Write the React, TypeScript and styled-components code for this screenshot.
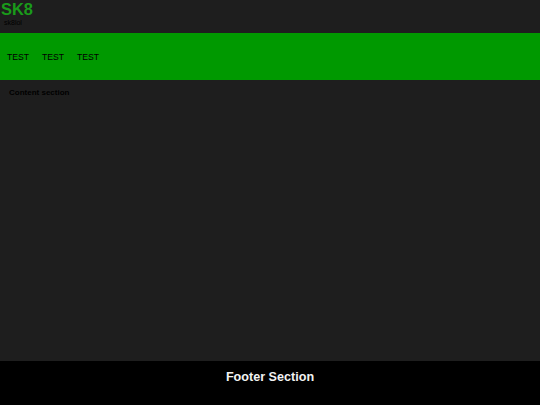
import React from "react";
import styled, { createGlobalStyle } from "styled-components";

const Global = createGlobalStyle`
  html, body { margin: 0; padding: 0; background: #1e1e1e; }
  body { font-family: "Liberation Sans", Arial, sans-serif; }
  #root { min-height: 405px; }
`;

const Page = styled.div`
  display: flex;
  flex-direction: column;
  height: 405px;
  background: #1e1e1e;
`;

const Header = styled.header`
  height: 33px;
  display: flex;
  flex-direction: column;
`;

const Logo = styled.h1`
  margin: 0 0 0 1px;
  font-size: 16.4px;
  line-height: 19px;
  font-weight: bold;
  color: #1a9a1a;
`;

const Tagline = styled.div`
  margin: 0 0 0 4px;
  font-size: 7px;
  line-height: 8px;
  color: #000;
`;

const Nav = styled.nav`
  height: 47px;
  background: #009900;
  display: flex;
  align-items: center;
  gap: 13px;
  padding-left: 7px;
`;

const NavItem = styled.span`
  font-size: 8.6px;
  color: #000;
`;

const Content = styled.main`
  flex: 1;
  padding: 8px 9px;
`;

const ContentTitle = styled.div`
  font-size: 8px;
  font-weight: bold;
  color: #000;
`;

const Footer = styled.footer`
  height: 44px;
  background: #000;
  display: flex;
  justify-content: center;
  padding-top: 9px;
  box-sizing: border-box;
`;

const FooterText = styled.div`
  font-size: 12.6px;
  font-weight: bold;
  color: #f2f2f2;
`;

export default function App() {
  return (
    <>
      <Global />
      <Page>
        <Header>
          <Logo>SK8</Logo>
          <Tagline>sk8lol</Tagline>
        </Header>
        <Nav>
          <NavItem>TEST</NavItem>
          <NavItem>TEST</NavItem>
          <NavItem>TEST</NavItem>
        </Nav>
        <Content>
          <ContentTitle>Content section</ContentTitle>
        </Content>
        <Footer>
          <FooterText>Footer Section</FooterText>
        </Footer>
      </Page>
    </>
  );
}
